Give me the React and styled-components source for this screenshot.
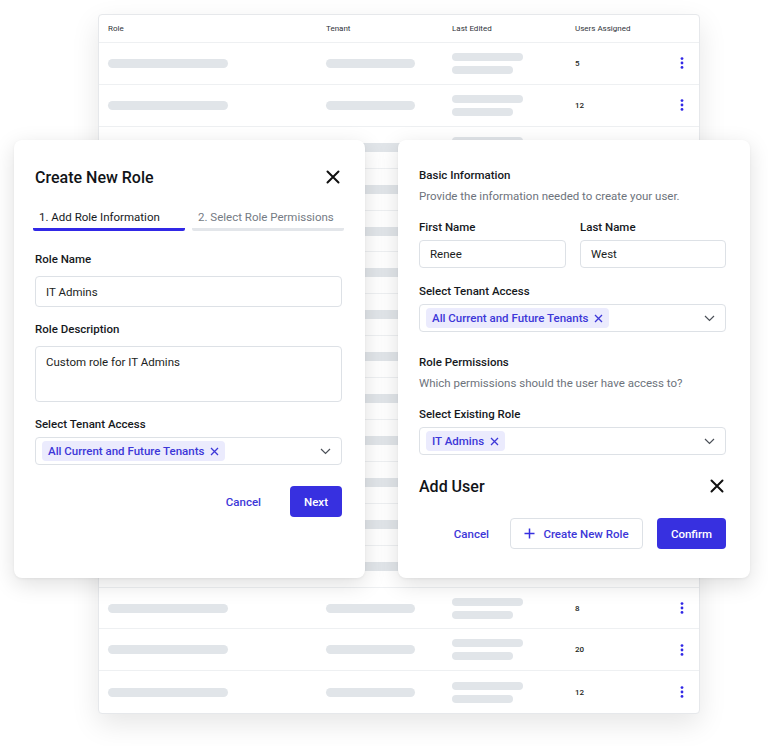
import React from 'react'
import styled, { createGlobalStyle } from 'styled-components'

const GlobalStyle = createGlobalStyle`
  body {
    margin: 0;
    background: #ffffff;
    font-family: Roboto, "Noto Sans", sans-serif;
    color: #111418;
  }
`

// counts of rows hidden behind the dialogs are not shown
const rows = [5, 12, null, null, null, null, null, null, null, null, null, null, null, 8, 20, 12]

const CloseIcon = ({ size = 14 }) => (
  <svg width={size} height={size} viewBox="0 0 14 14">
    <path d="M1.5 1.5 L12.5 12.5 M12.5 1.5 L1.5 12.5" stroke="#111" strokeWidth="2" strokeLinecap="round" />
  </svg>
)

const ChipX = () => (
  <svg width="9" height="9" viewBox="0 0 9 9">
    <path d="M1 1 L8 8 M8 1 L1 8" stroke="#3d37d8" strokeWidth="1.3" />
  </svg>
)

const Chevron = () => (
  <svg width="11" height="7" viewBox="0 0 11 7">
    <path d="M1 1 L5.5 5.5 L10 1" fill="none" stroke="#4b5058" strokeWidth="1.2" />
  </svg>
)

const Plus = () => (
  <svg width="11" height="11" viewBox="0 0 11 11">
    <path d="M5.5 0.5 V10.5 M0.5 5.5 H10.5" stroke="#3730e0" strokeWidth="1.5" />
  </svg>
)

const Kebab = () => (
  <svg width="4" height="12" viewBox="0 0 4 12">
    <circle cx="2" cy="1.6" r="1.4" fill="#3128e6" />
    <circle cx="2" cy="6" r="1.4" fill="#3128e6" />
    <circle cx="2" cy="10.4" r="1.4" fill="#3128e6" />
  </svg>
)

function TenantSelect({ value }) {
  return (
    <SelectBox>
      <Chip>
        {value}
        <ChipX />
      </Chip>
      <Chevron />
    </SelectBox>
  )
}

export default function App() {
  return (
    <>
      <GlobalStyle />
      <Canvas>
        <TableCard>
          <HeaderRow>
            <HeadCell>Role</HeadCell>
            <HeadCell>Tenant</HeadCell>
            <HeadCell>Last Edited</HeadCell>
            <HeadCell>Users Assigned</HeadCell>
            <span />
          </HeaderRow>
          {rows.map((n, i) => (
            <TableRow key={i} last={i === rows.length - 1}>
              <Skeleton w={120} />
              <Skeleton w={89} />
              <SkeletonStack>
                <Skeleton w={71} h={8} />
                <Skeleton w={61} h={8} />
              </SkeletonStack>
              <Count>{n}</Count>
              <KebabCell><Kebab /></KebabCell>
            </TableRow>
          ))}
        </TableCard>

        <Modal left={14} w={351}>
          <TitleRow>
            <Title>Create New Role</Title>
            <IconButton><CloseIcon /></IconButton>
          </TitleRow>
          <Tabs>
            <Tab active>1. Add Role Information</Tab>
            <Tab>2. Select Role Permissions</Tab>
          </Tabs>
          <Field top={20}>
            <Label gap={9}>Role Name</Label>
            <Input h={31}>IT Admins</Input>
          </Field>
          <Field top={14}>
            <Label gap={9}>Role Description</Label>
            <TextArea>Custom role for IT Admins</TextArea>
          </Field>
          <Field top={14}>
            <Label gap={5}>Select Tenant Access</Label>
            <TenantSelect value="All Current and Future Tenants" />
          </Field>
          <Actions top={21}>
            <TextButton space={15}>Cancel</TextButton>
            <PrimaryButton w={52}>Next</PrimaryButton>
          </Actions>
        </Modal>

        <Modal left={398} w={352}>
          <SectionTitle>Basic Information</SectionTitle>
          <SubText>Provide the information needed to create your user.</SubText>
          <NameGrid>
            <Field top={0}>
              <Label gap={5}>First Name</Label>
              <Input h={28}>Renee</Input>
            </Field>
            <Field top={0}>
              <Label gap={5}>Last Name</Label>
              <Input h={28}>West</Input>
            </Field>
          </NameGrid>
          <Field top={15}>
            <Label gap={5}>Select Tenant Access</Label>
            <TenantSelect value="All Current and Future Tenants" />
          </Field>
          <SectionTitle top={22}>Role Permissions</SectionTitle>
          <SubText>Which permissions should the user have access to?</SubText>
          <Field top={0}>
            <Label gap={5}>Select Existing Role</Label>
            <TenantSelect value="IT Admins" />
          </Field>
          <TitleRow top={21}>
            <Title>Add User</Title>
            <IconButton><CloseIcon /></IconButton>
          </TitleRow>
          <Actions top={22}>
            <TextButton space={7}>Cancel</TextButton>
            <OutlineButton><Plus />Create New Role</OutlineButton>
            <PrimaryButton w={69}>Confirm</PrimaryButton>
          </Actions>
        </Modal>
      </Canvas>
    </>
  )
}

const Canvas = styled.div`
  position: relative;
  width: 768px;
  height: 746px;
  overflow: hidden;
  padding-top: 14px;
  box-sizing: border-box;
`

const TableCard = styled.div`
  margin-left: 98px;
  width: 602px;
  background: #fff;
  border: 1px solid #e6e8eb;
  border-radius: 4px;
  box-sizing: border-box;
  box-shadow: 0 10px 28px rgba(0, 0, 0, 0.1);
`

const columns = '218px 126px 123px 1fr 24px'

const HeaderRow = styled.div`
  display: grid;
  grid-template-columns: ${columns};
  align-items: center;
  height: 27px;
  padding: 0 5px 0 9px;
  border-bottom: 1px solid #eef0f2;
`

const HeadCell = styled.span`
  font-size: 8px;
  color: #30343a;
`

const TableRow = styled.div`
  display: grid;
  grid-template-columns: ${columns};
  align-items: center;
  height: 41.9px;
  box-sizing: border-box;
  padding: 0 5px 0 9px;
  border-bottom: ${p => (p.last ? 'none' : '1px solid #eef0f2')};
`

const Skeleton = styled.div`
  width: ${p => p.w}px;
  height: ${p => p.h || 9}px;
  border-radius: 5px;
  background: #e1e5e9;
`

const SkeletonStack = styled.div`
  display: flex;
  flex-direction: column;
  gap: 5px;
`

const Count = styled.span`
  font-size: 8px;
  font-weight: 500;
  color: #1b1e22;
`

const KebabCell = styled.span`
  display: flex;
  justify-content: center;
`

const Modal = styled.div`
  position: absolute;
  top: 140px;
  left: ${p => p.left}px;
  width: ${p => p.w}px;
  height: 438px;
  box-sizing: border-box;
  padding: 27px ${p => p.w - 328}px 0 21px;
  background: #fff;
  border-radius: 8px;
  box-shadow: 0 6px 22px rgba(0, 0, 0, 0.13), 0 1px 3px rgba(0, 0, 0, 0.05);
  display: flex;
  flex-direction: column;
`

const TitleRow = styled.div`
  display: flex;
  align-items: center;
  justify-content: space-between;
  margin-top: ${p => p.top || 0}px;
  height: 20px;
`

const Title = styled.h2`
  margin: 0;
  font-size: 16px;
  font-weight: 500;
  color: #111418;
`

const IconButton = styled.span`
  display: flex;
  margin-right: 2px;
`

const Tabs = styled.div`
  display: grid;
  grid-template-columns: 152px 152px;
  gap: 7px;
  margin: 22px 0 0 -2px;
`

const Tab = styled.div`
  font-size: 11.5px;
  line-height: 16px;
  padding: 0 0 3px 6px;
  color: ${p => (p.active ? '#16191d' : '#757b84')};
  border-bottom: 3px solid ${p => (p.active ? '#3128e6' : '#e3e6ea')};
  border-radius: 0 0 2px 2px;
  white-space: nowrap;
`

const Field = styled.div`
  display: flex;
  flex-direction: column;
  margin-top: ${p => p.top}px;
`

const Label = styled.label`
  font-size: 11.5px;
  line-height: 16px;
  font-weight: 500;
  color: #16191d;
  margin-bottom: ${p => p.gap}px;
`

const Input = styled.div`
  height: ${p => p.h}px;
  box-sizing: border-box;
  border: 1px solid #dde1e6;
  border-radius: 4px;
  padding: 0 10px;
  display: flex;
  align-items: center;
  font-size: 11.5px;
  color: #1b1e22;
`

const TextArea = styled.div`
  height: 56px;
  box-sizing: border-box;
  border: 1px solid #dde1e6;
  border-radius: 4px;
  padding: 7px 10px;
  font-size: 11.5px;
  line-height: 16px;
  color: #1b1e22;
`

const SelectBox = styled.div`
  height: 28px;
  box-sizing: border-box;
  border: 1px solid #dde1e6;
  border-radius: 4px;
  padding: 0 10px 0 6px;
  display: flex;
  align-items: center;
  justify-content: space-between;
`

const Chip = styled.span`
  display: inline-flex;
  align-items: center;
  gap: 6px;
  height: 20px;
  padding: 0 6px;
  border-radius: 4px;
  background: #ebebfd;
  color: #3d37d8;
  font-size: 11.5px;
  font-weight: 500;
`

const Actions = styled.div`
  display: flex;
  align-items: center;
  justify-content: flex-end;
  gap: 14px;
  margin-top: ${p => p.top}px;
`

const TextButton = styled.span`
  color: #3d37d8;
  font-size: 11.5px;
  font-weight: 500;
  margin-right: ${p => p.space}px;
`

const PrimaryButton = styled.span`
  width: ${p => p.w}px;
  height: 31px;
  border-radius: 4px;
  background: #3730e0;
  color: #fff;
  font-size: 11.5px;
  font-weight: 500;
  display: flex;
  align-items: center;
  justify-content: center;
`

const OutlineButton = styled.span`
  width: 133px;
  height: 31px;
  box-sizing: border-box;
  border: 1px solid #dde1e6;
  border-radius: 4px;
  color: #3d37d8;
  font-size: 11.5px;
  font-weight: 500;
  display: flex;
  align-items: center;
  justify-content: center;
  gap: 8px;
`

const SectionTitle = styled.div`
  font-size: 11.5px;
  line-height: 16px;
  font-weight: 500;
  color: #16191d;
  margin-top: ${p => p.top || 0}px;
`

const SubText = styled.div`
  font-size: 11.5px;
  line-height: 16px;
  color: #6d737c;
  margin-top: 5px;
  margin-bottom: 15px;
`

const NameGrid = styled.div`
  display: grid;
  grid-template-columns: 147px 146px;
  gap: 14px;
`
